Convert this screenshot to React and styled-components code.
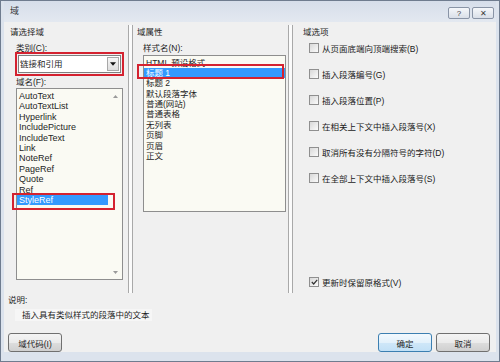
import React from 'react'
import styled, { createGlobalStyle, css } from 'styled-components'

const GlobalStyle = createGlobalStyle`
  html, body {
    margin: 0;
    padding: 0;
    background: #ffffff;
  }
  body {
    font-family: "Liberation Sans", "Noto Sans CJK SC", sans-serif;
    font-size: 8.5px;
    color: #1e1e1e;
  }
`

const Window = styled.div`
  width: 500px;
  height: 362px;
  box-sizing: border-box;
  border: 1px solid #6f7c8f;
  background: #dce3ed;
  padding: 0 3px 9px 3px;
  display: flex;
  flex-direction: column;
`

const TitleBar = styled.div`
  height: 21px;
  flex-shrink: 0;
  display: flex;
  align-items: flex-start;
  padding: 6px 2px 0 6px;
  box-sizing: border-box;
  background: linear-gradient(#d6deea, #e3e8f0);
`

const Title = styled.div`
  font-size: 9px;
  line-height: 9px;
  color: #3a3a3a;
  flex: 1;
`

const CaptionButton = styled.div`
  width: 22px;
  height: 12px;
  box-sizing: border-box;
  margin-left: 2px;
  border: 1px solid #8994a6;
  border-radius: 2px;
  background: linear-gradient(#f5f7fa, #d9dfe8);
  display: flex;
  align-items: center;
  justify-content: center;
  font-size: 8px;
  color: #3c3c3c;
`

const Client = styled.div`
  flex: 1;
  background: #f0f0f0;
  display: flex;
  flex-direction: column;
`

const Columns = styled.div`
  height: 273px;
  display: flex;
  flex-shrink: 0;
`

const Column = styled.div`
  width: ${p => p.$width ? `${p.$width}px` : 'auto'};
  flex: ${p => p.$width ? '0 0 auto' : '1'};
  box-sizing: border-box;
  padding-top: 5px;
  display: flex;
  flex-direction: column;
  padding-bottom: ${p => p.$bottom || 0}px;
`

const Separator = styled.div`
  width: 5px;
  box-sizing: border-box;
  margin: 3px 0 2px;
  border-left: 1px solid #a9a9a9;
  border-right: 1px solid #a9a9a9;
  background: #fbfbfb;
`

const GroupTitle = styled.div`
  margin-left: ${p => p.$indent}px;
  height: 10px;
  line-height: 10px;
  white-space: nowrap;
`

const FieldLabel = styled.div`
  margin: ${p => p.$gap ?? 6}px 0 0 ${p => p.$indent}px;
  height: 10px;
  line-height: 10px;
  white-space: nowrap;
`

const RedFrame = styled.div`
  margin: -1px 0 0 11px;
  width: 109px;
  box-sizing: border-box;
  border: 2px solid #d42230;
  padding: 1px;
`

const Select = styled.div`
  height: 18px;
  box-sizing: border-box;
  border: 1px solid #7f7f7f;
  background: #ffffff;
  display: flex;
  align-items: center;
`

const SelectText = styled.div`
  flex: 1;
  padding-left: 1px;
  line-height: 10px;
  white-space: nowrap;
`

const DropButton = styled.div`
  width: 12px;
  height: 14px;
  margin-right: 1px;
  box-sizing: border-box;
  border: 1px solid #a8a8a8;
  background: linear-gradient(#f6f6f6, #dedede);
  display: flex;
  align-items: center;
  justify-content: center;
`

const ListBox = styled.div`
  position: relative;
  display: flex;
  margin: ${p => p.$top}px 0 0 ${p => p.$indent}px;
  width: ${p => p.$width}px;
  height: ${p => p.$height}px;
  box-sizing: border-box;
  border: 1px solid #8e8e8e;
  background: #fafaf3;
`

const Items = styled.div`
  flex: 1;
  padding-top: ${p => p.$pad}px;
  font-size: ${p => p.$latin ? 9 : 8.5}px;
`

const Item = styled.div`
  position: relative;
  height: 10.4px;
  line-height: 10.4px;
  padding-left: 2px;
  white-space: nowrap;
  ${p => p.$selected && css`
    background: #3399ff;
    color: #ffffff;
  `}
  ${p => p.$mark && css`
    &::after {
      content: '';
      position: absolute;
      top: ${p.$mark[0]}px;
      right: ${p.$mark[1]}px;
      bottom: ${p.$mark[2]}px;
      left: ${p.$mark[3]}px;
      border: 2px solid #d42230;
    }
  `}
`

const ScrollColumn = styled.div`
  width: 14px;
  display: flex;
  flex-direction: column;
  justify-content: space-between;
  align-items: center;
  padding: 6px 0 5px;
  box-sizing: border-box;
`

const CheckRow = styled.div`
  display: flex;
  align-items: center;
  height: 10px;
  margin: ${p => p.$first ? 6 : 16}px 0 0 16px;
  white-space: nowrap;
  color: #1a1a1a;
  ${p => p.$bottom && css`margin-top: auto;`}
`

const Box = styled.div`
  width: 10px;
  height: 10px;
  box-sizing: border-box;
  border: 1px solid #8f8f8f;
  background: linear-gradient(135deg, #d8d8d8, #fbfbfb);
  margin-right: 3px;
  display: flex;
  align-items: center;
  justify-content: center;
`

const Description = styled.div`
  margin: 0 0 0 4px;
  height: 10px;
  line-height: 10px;
`

const DescText = styled.div`
  margin: 4px 0 0 11px;
  padding-left: 7px;
  width: 130px;
  height: 12px;
  line-height: 12px;
  background: #f6f6f6;
  white-space: nowrap;
`

const Footer = styled.div`
  display: flex;
  margin-top: 12px;
  padding: 0 6px 0 4px;
  gap: 4px;
`

const Button = styled.div`
  width: 54px;
  height: 19px;
  box-sizing: border-box;
  border: 1px solid ${p => p.$default ? '#3c7fb1' : '#707070'};
  border-radius: 3px;
  background: ${p => p.$default
    ? 'linear-gradient(#f2f9fe, #e3f1fb 50%, #cfe7f8 51%, #c2e0f6)'
    : 'linear-gradient(#f4f4f4, #ebebeb 50%, #dddddd 51%, #d0d0d0)'};
  display: flex;
  align-items: center;
  justify-content: center;
  white-space: nowrap;
  ${p => p.$push && css`margin-left: auto;`}
`

const Arrow = ({ up, color = '#9a9a9a', w = 5, h = 3 }) => (
  <svg width={w} height={h} viewBox="0 0 5 3">
    <path d={up ? 'M0 3 L2.5 0 L5 3 Z' : 'M0 0 L5 0 L2.5 3 Z'} fill={color} />
  </svg>
)

const fieldNames = [
  'AutoText', 'AutoTextList', 'Hyperlink', 'IncludePicture', 'IncludeText',
  'Link', 'NoteRef', 'PageRef', 'Quote', 'Ref', 'StyleRef',
]

const styleNames = [
  'HTML 预设格式', '标题 1', '标题 2', '默认段落字体', '普通(网站)',
  '普通表格', '无列表', '页脚', '页眉', '正文',
]

const options = [
  '从页面底端向顶端搜索(B)',
  '插入段落编号(G)',
  '插入段落位置(P)',
  '在相关上下文中插入段落号(X)',
  '取消所有没有分隔符号的字符(D)',
  '在全部上下文中插入段落号(S)',
]

export default function App() {
  return (
    <>
      <GlobalStyle />
      <Window>
        <TitleBar>
          <Title>域</Title>
          <CaptionButton>?</CaptionButton>
          <CaptionButton>✕</CaptionButton>
        </TitleBar>
        <Client>
          <Columns>
            <Column $width={124}>
              <GroupTitle $indent={6}>请选择域</GroupTitle>
              <FieldLabel $indent={12}>类别(C):</FieldLabel>
              <RedFrame>
                <Select>
                  <SelectText>链接和引用</SelectText>
                  <DropButton>
                    <Arrow color="#111" w={6} h={4} />
                  </DropButton>
                </Select>
              </RedFrame>
              <FieldLabel $indent={12} $gap={1}>域名(F):</FieldLabel>
              <ListBox $top={1} $indent={12} $width={107} $height={192}>
                <Items $pad={2} $latin>
                  {fieldNames.map(name => (
                    <Item
                      key={name}
                      $selected={name === 'StyleRef'}
                      $mark={name === 'StyleRef' ? [-2, -7, -5, -5] : null}
                    >
                      {name}
                    </Item>
                  ))}
                </Items>
                <ScrollColumn>
                  <Arrow up />
                  <Arrow />
                </ScrollColumn>
              </ListBox>
            </Column>
            <Separator />
            <Column $width={155}>
              <GroupTitle $indent={4}>域属性</GroupTitle>
              <FieldLabel $indent={10}>样式名(N):</FieldLabel>
              <ListBox $top={2} $indent={10} $width={143} $height={157}>
                <Items $pad={1.5}>
                  {styleNames.map(name => (
                    <Item
                      key={name}
                      $selected={name === '标题 1'}
                      $mark={name === '标题 1' ? [-4, 1, -1, -7] : null}
                    >
                      {name}
                    </Item>
                  ))}
                </Items>
              </ListBox>
            </Column>
            <Separator />
            <Column $bottom={8}>
              <GroupTitle $indent={10}>域选项</GroupTitle>
              {options.map((label, i) => (
                <CheckRow key={label} $first={i === 0}>
                  <Box />
                  {label}
                </CheckRow>
              ))}
              <CheckRow $bottom>
                <Box>
                  <svg width="7" height="6" viewBox="0 0 7 6">
                    <path d="M0.8 3 L2.7 5 L6.2 0.8" stroke="#333" strokeWidth="1.2" fill="none" />
                  </svg>
                </Box>
                更新时保留原格式(V)
              </CheckRow>
            </Column>
          </Columns>
          <Description>说明:</Description>
          <DescText>插入具有类似样式的段落中的文本</DescText>
          <Footer>
            <Button>域代码(I)</Button>
            <Button $default $push>确定</Button>
            <Button>取消</Button>
          </Footer>
        </Client>
      </Window>
    </>
  )
}
